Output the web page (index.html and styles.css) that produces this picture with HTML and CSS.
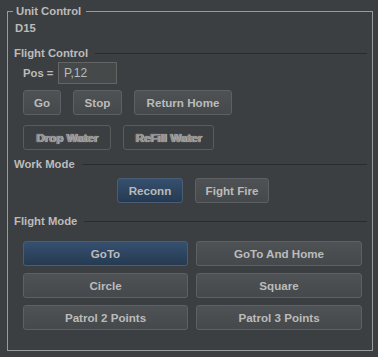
FILE: index.html
```html
<!DOCTYPE html>
<html>
<head>
<meta charset="utf-8">
<link rel="stylesheet" href="styles.css">
</head>
<body>
<div class="frame">
  <fieldset class="unit">
    <legend class="unit-title">Unit Control</legend>
    <div class="unit-id">D15</div>

    <div class="section-title sec-flight"><span>Flight Control</span><span class="rule"></span></div>
    <div class="pos-row">
      <span class="pos-label">Pos =</span>
      <div class="field">P,12</div>
    </div>
    <div class="btn-row row-1">
      <button class="btn w-go">Go</button>
      <button class="btn w-stop">Stop</button>
      <button class="btn w-home">Return Home</button>
    </div>
    <div class="btn-row row-2">
      <button class="btn disabled w-drop">Drop Water</button>
      <button class="btn disabled w-refill">ReFill Water</button>
    </div>

    <div class="section-title sec-work"><span>Work Mode</span><span class="rule"></span></div>
    <div class="btn-row row-work">
      <button class="btn selected w-reconn">Reconn</button>
      <button class="btn w-fight">Fight Fire</button>
    </div>

    <div class="section-title sec-mode"><span>Flight Mode</span><span class="rule"></span></div>
    <div class="mode-grid">
      <button class="btn selected">GoTo</button>
      <button class="btn">GoTo And Home</button>
      <button class="btn">Circle</button>
      <button class="btn">Square</button>
      <button class="btn">Patrol 2 Points</button>
      <button class="btn">Patrol 3 Points</button>
    </div>
  </fieldset>
</div>
</body>
</html>
```

FILE: styles.css
```css
html, body {
  margin: 0;
  padding: 0;
  background: #3c3f41;
}
body {
  font-family: "Liberation Sans", Arial, sans-serif;
  font-weight: bold;
  font-size: 11.3px;
  line-height: 13px;
  color: #bbbbbb;
  width: 378px;
  height: 357px;
  overflow: hidden;
}
.frame {
  padding: 5px 5px 6px 7px;
}
.unit {
  margin: 0;
  padding: 0;
  width: 366px;
  height: 346px;
  box-sizing: border-box;
  border: 1px solid #9a9a9a;
  min-width: 0;
}
.unit-title {
  margin-left: 5px;
  padding: 0 5px 0 3px;
  line-height: 13px;
  height: 13px;
}
.unit-id {
  margin: 4px 0 0 7px;
}
.section-title {
  display: flex;
  align-items: center;
  margin: 0 5px 0 6px;
  height: 13px;
}
.section-title .rule {
  flex: 1;
  height: 1px;
  margin-left: 7px;
  background: #2b2b2b;
}
.sec-flight { margin-top: 12px; }
.sec-work { margin-top: 8px; }
.sec-mode { margin-top: 12px; }

.pos-row {
  display: flex;
  align-items: center;
  margin: 2px 0 0 15px;
}
.pos-label {
  width: 35px;
}
.field {
  width: 59px;
  height: 22px;
  box-sizing: border-box;
  border: 1px solid #646464;
  background: #45494a;
  padding-left: 5px;
  font-weight: normal;
  font-size: 12px;
  line-height: 20px;
  color: #bbbbbb;
}

.btn-row {
  display: flex;
  gap: 12px;
  padding-left: 15px;
}
.row-1 { margin-top: 6px; }
.row-2 { margin-top: 10px; }
.row-work { margin-top: 7px; padding-left: 109px; }

.btn {
  height: 25px;
  box-sizing: border-box;
  margin: 0;
  padding: 0;
  border: 1px solid #5e6163;
  border-radius: 3px;
  background: linear-gradient(#4e5254, #46494b);
  color: #bbbbbb;
  font-family: "Liberation Sans", Arial, sans-serif;
  font-weight: bold;
  font-size: 11.6px;
  line-height: 23px;
  text-align: center;
  white-space: nowrap;
}
.btn.selected {
  background: linear-gradient(#35506f, #263a52);
  border-color: #4a5d74;
}
.btn.disabled {
  background: #3c3f41;
  border-color: #595c5e;
  color: #8e8e8e;
  text-shadow: 0 0 1px #d0d0d0, 1px 0 0 #a5a5a5;
}
.w-go { width: 38px; }
.w-stop { width: 49px; }
.w-home { width: 98px; }
.w-drop { width: 88px; }
.w-refill { width: 91px; }
.w-reconn { width: 66px; }
.w-fight { width: 74px; }

.mode-grid {
  display: grid;
  grid-template-columns: 165px 166px;
  grid-auto-rows: 25px;
  column-gap: 8px;
  row-gap: 7px;
  margin-top: 13px;
  padding-left: 15px;
}
```
